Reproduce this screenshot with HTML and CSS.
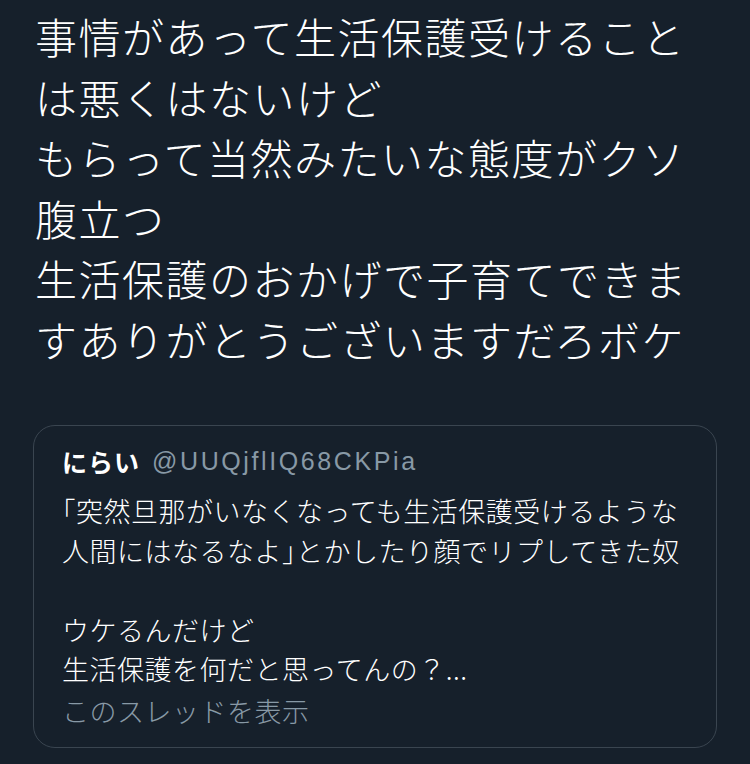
FILE: index.html
```html
<!DOCTYPE html>
<html>
<head>
    <meta charset="utf-8">
    <title>Tweet</title>
    <link rel="stylesheet" href="styles.css">
</head>
<body>
    <div class="tweet">
        <p class="tweet-text">事情があって生活保護受けることは悪くはないけど<br>もらって当然みたいな態度がクソ腹立つ<br>生活保護のおかげで子育てできますありがとうございますだろボケ</p>

        <div class="quote">
            <div class="quote-head">
                <span class="quote-name">にらい</span>
                <span class="quote-handle">@UUQjflIQ68CKPia</span>
            </div>
            <p class="quote-text">「突然旦那がいなくなっても生活保護受けるような人間にはなるなよ<span class="half">」</span>とかしたり顔でリプしてきた奴<br><br>ウケるんだけど<br>生活保護を何だと思ってんの？...</p>
            <div class="quote-more">このスレッドを表示</div>
        </div>
    </div>
</body>
</html>
```

FILE: styles.css
```css
body {
    margin: 0;
    background-color: #16202b;
    color: #ffffff;
    font-family: "Noto Sans CJK JP", "Noto Sans", sans-serif;
}
.tweet {
    padding-top: 6px;
}
.tweet-text {
    margin: 0;
    padding: 0 35px;
    font-size: 42px;
    font-weight: 300;
    letter-spacing: 1.5px;
    line-height: 60.5px;
}
.quote {
    margin: 56px 33px 0;
    border: 1px solid #3a4550;
    border-radius: 22px;
    padding: 18px 28px 17px;
}
.quote-head {
    display: flex;
    align-items: center;
    gap: 12px;
    line-height: 34px;
}
.quote-name {
    font-size: 25px;
    font-weight: 700;
    letter-spacing: 1px;
}
.quote-handle {
    font-family: "Liberation Sans", Arial, sans-serif;
    font-size: 25px;
    letter-spacing: 2.6px;
    color: #8899a6;
}
.quote-text {
    margin: 13px 0 0;
    font-size: 27px;
    font-weight: 300;
    letter-spacing: 0.5px;
    line-height: 39.5px;
    text-spacing-trim: trim-start;
}
.half {
    font-feature-settings: "halt";
}
.quote-more {
    margin-top: 2px;
    font-size: 27px;
    font-weight: 300;
    letter-spacing: 0.5px;
    line-height: 39.5px;
    color: #8899a6;
}
```
